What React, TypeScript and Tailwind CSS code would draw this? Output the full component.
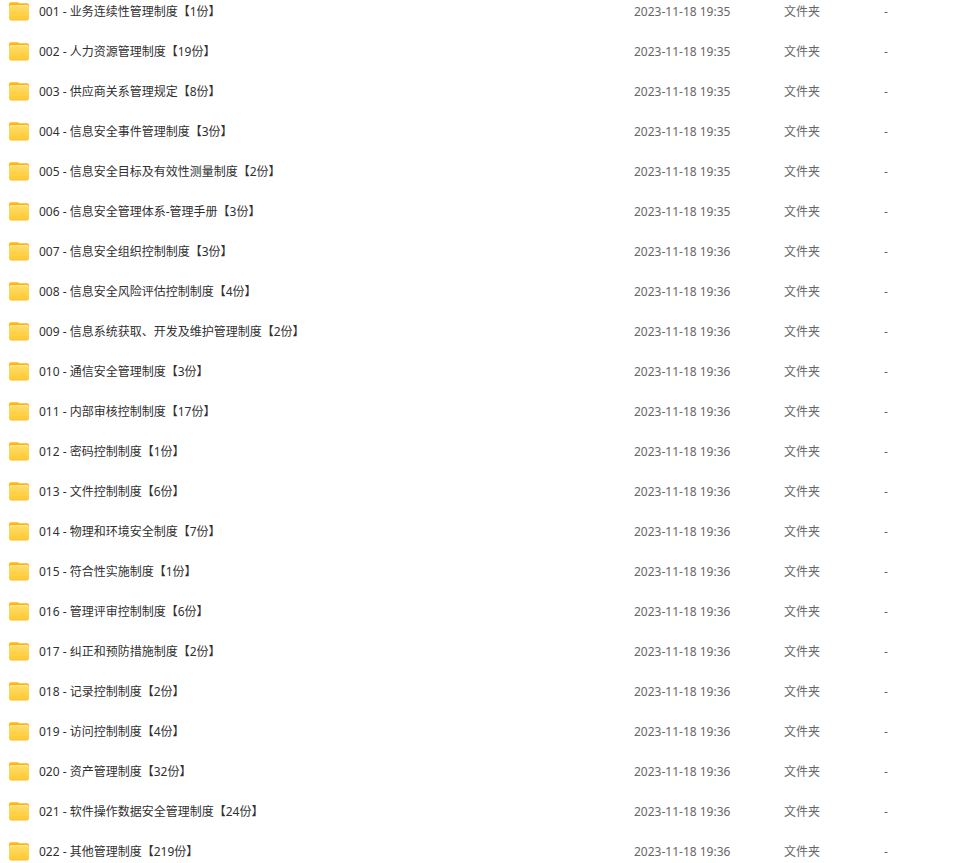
type FileRow = {
  name: string;
  modified: string;
};

const rows: FileRow[] = [
  { name: "001 - 业务连续性管理制度【1份】", modified: "2023-11-18 19:35" },
  { name: "002 - 人力资源管理制度【19份】", modified: "2023-11-18 19:35" },
  { name: "003 - 供应商关系管理规定【8份】", modified: "2023-11-18 19:35" },
  { name: "004 - 信息安全事件管理制度【3份】", modified: "2023-11-18 19:35" },
  { name: "005 - 信息安全目标及有效性测量制度【2份】", modified: "2023-11-18 19:35" },
  { name: "006 - 信息安全管理体系-管理手册【3份】", modified: "2023-11-18 19:35" },
  { name: "007 - 信息安全组织控制制度【3份】", modified: "2023-11-18 19:36" },
  { name: "008 - 信息安全风险评估控制制度【4份】", modified: "2023-11-18 19:36" },
  { name: "009 - 信息系统获取、开发及维护管理制度【2份】", modified: "2023-11-18 19:36" },
  { name: "010 - 通信安全管理制度【3份】", modified: "2023-11-18 19:36" },
  { name: "011 - 内部审核控制制度【17份】", modified: "2023-11-18 19:36" },
  { name: "012 - 密码控制制度【1份】", modified: "2023-11-18 19:36" },
  { name: "013 - 文件控制制度【6份】", modified: "2023-11-18 19:36" },
  { name: "014 - 物理和环境安全制度【7份】", modified: "2023-11-18 19:36" },
  { name: "015 - 符合性实施制度【1份】", modified: "2023-11-18 19:36" },
  { name: "016 - 管理评审控制制度【6份】", modified: "2023-11-18 19:36" },
  { name: "017 - 纠正和预防措施制度【2份】", modified: "2023-11-18 19:36" },
  { name: "018 - 记录控制制度【2份】", modified: "2023-11-18 19:36" },
  { name: "019 - 访问控制制度【4份】", modified: "2023-11-18 19:36" },
  { name: "020 - 资产管理制度【32份】", modified: "2023-11-18 19:36" },
  { name: "021 - 软件操作数据安全管理制度【24份】", modified: "2023-11-18 19:36" },
  { name: "022 - 其他管理制度【219份】", modified: "2023-11-18 19:36" },
];

const FolderIcon = () => (
  <svg className="h-5 w-5 shrink-0" viewBox="0 0 20 20" aria-hidden="true">
    <defs>
      <linearGradient id="folder-front" x1="0" y1="0" x2="0" y2="1">
        <stop offset="0" stopColor="#ffdc66" />
        <stop offset="1" stopColor="#ffca33" />
      </linearGradient>
      <linearGradient id="folder-shine" x1="0" y1="0" x2="0" y2="1">
        <stop offset="0" stopColor="#fff0b8" />
        <stop offset="1" stopColor="#ffdc66" />
      </linearGradient>
    </defs>
    <rect x="0.500" y="5" width="19" height="14" rx="2" fill="#fff0cf" />
    <path d="M0 2Q0 0.200 2 0.200H8.600Q9.600 0.200 10.400 1.200H18Q20 1.200 20 3V9H0Z" fill="#ffb616" />
    <path d="M0 5Q0 3.200 2 3.200H18Q20 3.200 20 5V16.200Q20 18.200 18 18.200H2Q0 18.200 0 16.200Z" fill="url(#folder-front)" />
    <path d="M1 5.600Q1 3.200 3 3.200H18Q19.500 3.200 19.500 4.600H4Q2 4.600 1 5.600Z" fill="url(#folder-shine)" />
    <path d="M0.600 17.300Q1.200 18.200 2 18.200H18Q18.800 18.200 19.400 17.300Z" fill="#fdc22a" />
  </svg>
);

export default function App() {
  return (
    <main className="overflow-hidden bg-white font-['Noto_Sans','Noto_Sans_CJK_SC',sans-serif] text-xs">
      <table className="-mt-2 w-full table-fixed border-collapse text-left">
        <colgroup>
          <col />
          <col className="w-[150px]" />
          <col className="w-[100px]" />
          <col className="w-[76px]" />
        </colgroup>
        <tbody>
          {rows.map((row) => (
            <tr key={row.name} className="h-10 text-[#666666]">
              <td className="p-0 pl-[9px]">
                <div className="flex items-center gap-2.5 text-[#303030]">
                  <FolderIcon />
                  <span className="whitespace-nowrap">{row.name}</span>
                </div>
              </td>
              <td className="p-0">{row.modified}</td>
              <td className="p-0">文件夹</td>
              <td className="p-0">-</td>
            </tr>
          ))}
        </tbody>
      </table>
    </main>
  );
}
